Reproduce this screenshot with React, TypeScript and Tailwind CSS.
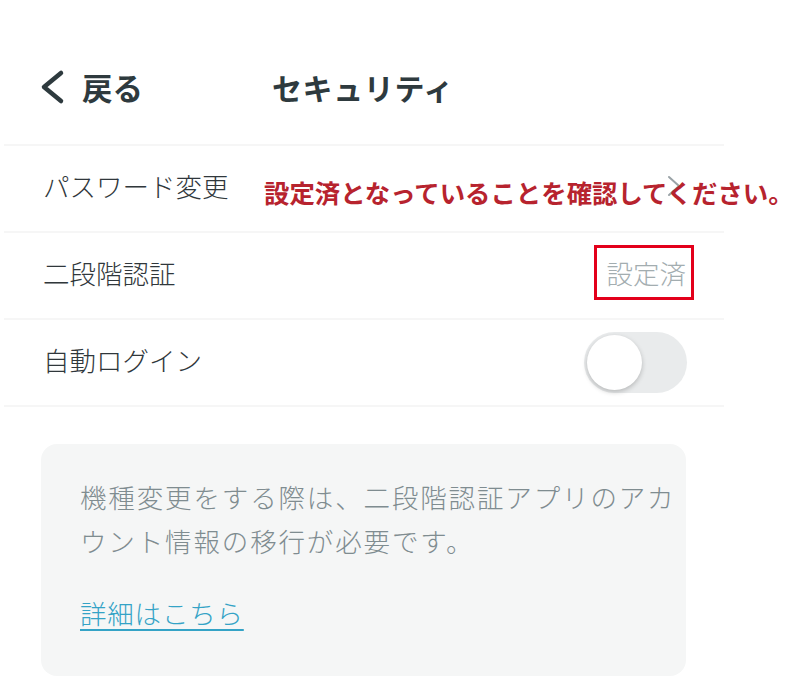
import React from 'react';

const font = { fontFamily: '"Noto Sans CJK JP", "Noto Sans", sans-serif' };

function Row({ label, children }: { label: string; children?: React.ReactNode }) {
  return (
    <div className="flex h-[87px] items-center justify-between border-t-2 border-[#f6f6f6] pb-[5px] pl-[39px] pr-[38px]">
      <span className="text-[26.5px] font-light leading-none text-[#30373b]">{label}</span>
      {children}
    </div>
  );
}

export default function App() {
  return (
    <div className="relative h-[694px] w-[801px] overflow-hidden bg-white" style={font}>
      <div className="w-[720px] pl-[4px] box-content">
        <header className="h-[144px] pt-[52px]">
          <div className="relative flex h-[70px] items-center">
            <div className="flex items-center pl-[33px]">
              <svg width="32" height="36" viewBox="0 0 32 36" fill="none">
                <path d="M24 4 L7 18 L24 32" stroke="#2e3a3e" strokeWidth="4.5" strokeLinecap="round" strokeLinejoin="round" />
              </svg>
              <span className="ml-[13px] text-[30.5px] font-bold leading-none text-[#2e3a3e]">戻る</span>
            </div>
            <span className="absolute left-[268px] text-[30px] font-bold leading-none tracking-[0.02em] text-[#2e3a3e]">
              セキュリティ
            </span>
          </div>
        </header>

        <Row label="パスワード変更">
          <svg width="16" height="22" viewBox="0 0 16 22" fill="none" className="mr-[4px]">
            <path d="M3 2 L13 11 L3 20" stroke="#9aa3a7" strokeWidth="2" strokeLinecap="round" strokeLinejoin="round" />
          </svg>
        </Row>
        <Row label="二段階認証">
          <span className="relative text-[26.5px] font-light leading-none text-[#a3adb0]">
            設定済
            <span className="absolute -left-[13px] -right-[8px] -top-[15px] -bottom-[14px] border-[3px] border-[#e3001b]" />
          </span>
        </Row>
        <Row label="自動ログイン">
          <div className="-mr-[1px] mt-[5px] flex h-[61px] w-[103px] items-center rounded-full bg-[#e9ebec] pl-[3px]">
            <div className="h-[55px] w-[55px] rounded-full bg-white shadow-[0_2px_5px_rgba(0,0,0,0.22)]" />
          </div>
        </Row>
        <div className="border-t-2 border-[#f6f6f6]" />
      </div>

      <div className="ml-[41px] mt-[37px] w-[645px] rounded-[16px] bg-[#f5f6f6] pb-[41px] pl-[39px] pr-0 pt-[31px]">
        <p className="text-[26.5px] font-light leading-[44px] tracking-[0.07em] text-[#7f8c90]">
          機種変更をする際は、二段階認証アプリのアカウント情報の移行が必要です。
        </p>
        <a className="mt-[28px] block text-[26.5px] font-light leading-[44px] tracking-[0.03em] text-[#34a3c6] underline decoration-[2px] underline-offset-[5px]">
          詳細はこちら
        </a>
      </div>

      <div className="absolute left-[264px] top-[177px] text-[25.4px] font-bold leading-[30px] text-[#b7232e]">
        設定済となっていることを確認してください。
      </div>
    </div>
  );
}
